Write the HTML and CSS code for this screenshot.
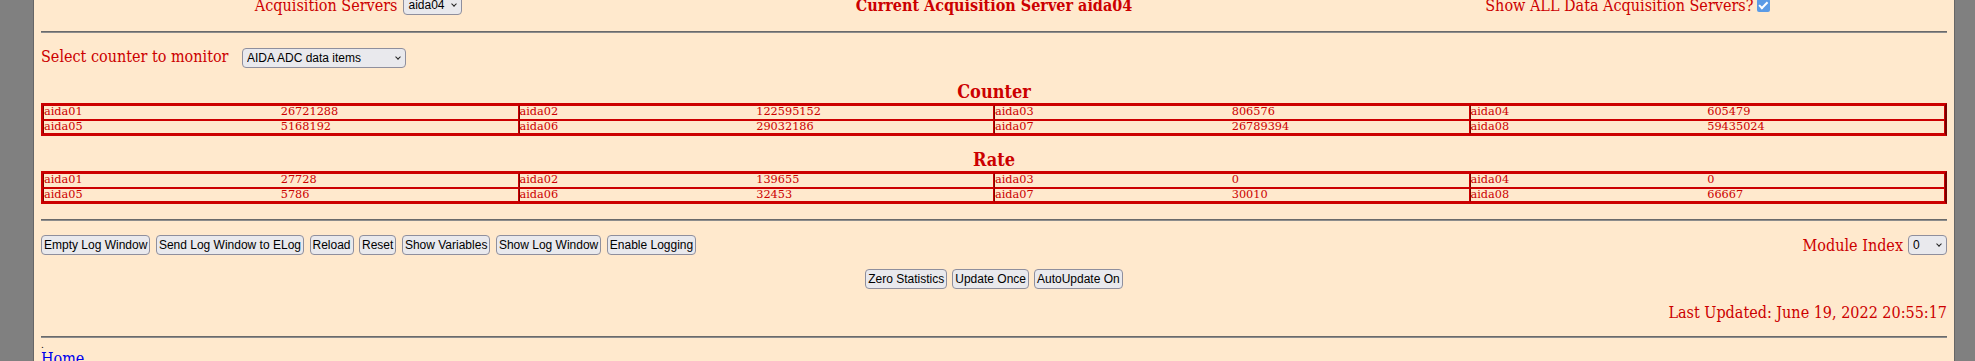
FILE: index.html
```html
<!DOCTYPE html>
<html lang="en">
<head>
<meta charset="utf-8">
<title>AIDA Counter Monitor</title>
<link rel="stylesheet" href="styles.css">
</head>
<body>
<div class="page">
  <div class="toprow">
    <div class="tcell">Acquisition Servers<span class="sel sel-server"><select><option>aida04</option></select></span></div>
    <div class="tcell bold">Current Acquisition Server aida04</div>
    <div class="tcell">Show ALL Data Acquisition Servers?<input type="checkbox" class="chk" checked></div>
  </div>
  <hr class="rule rule-top">
  <div class="selrow"><span>Select counter to monitor</span><span class="sel sel-counter"><select><option>AIDA ADC data items</option></select></span></div>

  <h3 class="caption">Counter</h3>
  <table class="grid">
    <tr>
      <td><div class="pair"><span>aida01</span><span>26721288</span></div></td>
      <td><div class="pair"><span>aida02</span><span>122595152</span></div></td>
      <td><div class="pair"><span>aida03</span><span>806576</span></div></td>
      <td><div class="pair"><span>aida04</span><span>605479</span></div></td>
    </tr>
    <tr>
      <td><div class="pair"><span>aida05</span><span>5168192</span></div></td>
      <td><div class="pair"><span>aida06</span><span>29032186</span></div></td>
      <td><div class="pair"><span>aida07</span><span>26789394</span></div></td>
      <td><div class="pair"><span>aida08</span><span>59435024</span></div></td>
    </tr>
  </table>

  <h3 class="caption">Rate</h3>
  <table class="grid">
    <tr>
      <td><div class="pair"><span>aida01</span><span>27728</span></div></td>
      <td><div class="pair"><span>aida02</span><span>139655</span></div></td>
      <td><div class="pair"><span>aida03</span><span>0</span></div></td>
      <td><div class="pair"><span>aida04</span><span>0</span></div></td>
    </tr>
    <tr>
      <td><div class="pair"><span>aida05</span><span>5786</span></div></td>
      <td><div class="pair"><span>aida06</span><span>32453</span></div></td>
      <td><div class="pair"><span>aida07</span><span>30010</span></div></td>
      <td><div class="pair"><span>aida08</span><span>66667</span></div></td>
    </tr>
  </table>

  <hr class="rule rule-mid">
  <div class="btnrow">
    <div class="btngroup">
      <button class="btn">Empty Log Window</button>
      <button class="btn">Send Log Window to ELog</button>
      <button class="btn">Reload</button>
      <button class="btn">Reset</button>
      <button class="btn">Show Variables</button>
      <button class="btn">Show Log Window</button>
      <button class="btn">Enable Logging</button>
    </div>
    <div class="module"><span>Module Index</span><span class="sel sel-module"><select><option>0</option></select></span></div>
  </div>
  <div class="centerrow">
    <button class="btn">Zero Statistics</button>
    <button class="btn">Update Once</button>
    <button class="btn">AutoUpdate On</button>
  </div>
  <div class="updated">Last Updated: June 19, 2022 20:55:17</div>
  <hr class="rule rule-bottom">
  <div class="dot">.</div>
  <a class="home" href="#">Home</a>
</div>
</body>
</html>
```
FILE: styles.css
```css
html, body {
  margin: 0;
  padding: 0;
}
body {
  background: #808080;
  font-family: "DejaVu Serif Condensed", "DejaVu Serif", serif;
  font-stretch: semi-condensed;
  font-size: 16px;
  color: #cc0000;
  overflow: hidden;
}
.page {
  margin: 0 20px 0 33px;
  border-left: 1px solid #666666;
  border-right: 1px solid #666666;
  background: #ffe9cd;
  padding: 0 7px 30px;
}
.toprow {
  display: grid;
  grid-template-columns: repeat(3, 1fr);
  height: 20px;
  margin-top: -5px;
}
.tcell {
  display: flex;
  align-items: center;
  justify-content: center;
  white-space: nowrap;
}
.bold { font-weight: bold; }

.rule {
  height: 0;
  border: 0;
  border-top: 1px solid #6a6a6a;
  border-bottom: 1px solid #8c8c8c;
  margin: 0;
}
.rule-top { margin-top: 16px; }
.rule-mid { margin-top: 15px; }
.rule-bottom { margin-top: 14px; }

.sel {
  position: relative;
  display: inline-block;
  line-height: 0;
}
.sel select {
  -webkit-appearance: none;
  appearance: none;
  box-sizing: border-box;
  height: 20px;
  margin: 0;
  padding: 0 0 0 4px;
  border: 1px solid #8f8f9d;
  border-radius: 4px;
  background: #e9e9ed;
  color: #000;
  font-family: "Liberation Sans", Arial, sans-serif;
  font-size: 12px;
  line-height: 14px;
}
.sel::after {
  content: "";
  position: absolute;
  right: 6px;
  top: 50%;
  width: 3px;
  height: 3px;
  border-right: 1.5px solid #222;
  border-bottom: 1.5px solid #222;
  transform: translateY(-75%) rotate(45deg);
  pointer-events: none;
}
.sel-server { margin-left: 6px; }
.sel-server select { width: 59px; }
.sel-counter { margin-left: 13.5px; }
.sel-counter select { width: 164px; }
.sel-module { margin-left: 5px; }
.sel-module select { width: 39px; }

.chk {
  -webkit-appearance: none;
  appearance: none;
  position: relative;
  width: 13px;
  height: 13px;
  margin: 0 3px 0 4px;
  border-radius: 2px;
  background: #5b9be6;
}
.chk::after {
  content: "";
  position: absolute;
  left: 4px;
  top: 1.5px;
  width: 3px;
  height: 6.5px;
  border-right: 2px solid #fff;
  border-bottom: 2px solid #fff;
  transform: rotate(45deg);
}

.selrow {
  display: flex;
  align-items: baseline;
  margin-top: 14px;
}

.caption {
  font-size: 18px;
  font-weight: bold;
  text-align: center;
  line-height: 21px;
  margin: 13px 0 1px;
}

.grid {
  width: 100%;
  table-layout: fixed;
  border-collapse: separate;
  border-spacing: 0;
  border: 2px solid #cc0000;
  border-right-color: #7a0000;
  font-family: "DejaVu Serif", serif;
  font-stretch: normal;
  font-size: 11.3px;
  line-height: 12.5px;
  color: #cc0000;
}
.grid td {
  padding: 0;
  border: 1px solid #cc0000;
  border-left-color: #800000;
}
.pair {
  display: grid;
  grid-template-columns: 1fr 1fr;
  white-space: nowrap;
}

.btnrow {
  display: flex;
  justify-content: space-between;
  align-items: center;
  margin-top: 14px;
}
.btngroup {
  display: flex;
  gap: 5.5px;
}
.module {
  display: flex;
  align-items: center;
}
.btn {
  box-sizing: border-box;
  height: 20px;
  margin: 0;
  padding: 2px 2px;
  border: 1px solid #8f8f9d;
  border-radius: 4px;
  background: #e9e9ed;
  color: #000;
  font-family: "Liberation Sans", Arial, sans-serif;
  font-size: 12px;
  line-height: 14px;
  white-space: nowrap;
}
.centerrow {
  display: flex;
  justify-content: center;
  gap: 5px;
  margin-top: 14px;
}
.updated {
  text-align: right;
  margin-top: 14px;
}
.dot {
  font-size: 10px;
  line-height: 8px;
  margin-top: 3px;
  color: #000;
}
.home {
  display: block;
  color: #0000ee;
  width: max-content;
}
```
